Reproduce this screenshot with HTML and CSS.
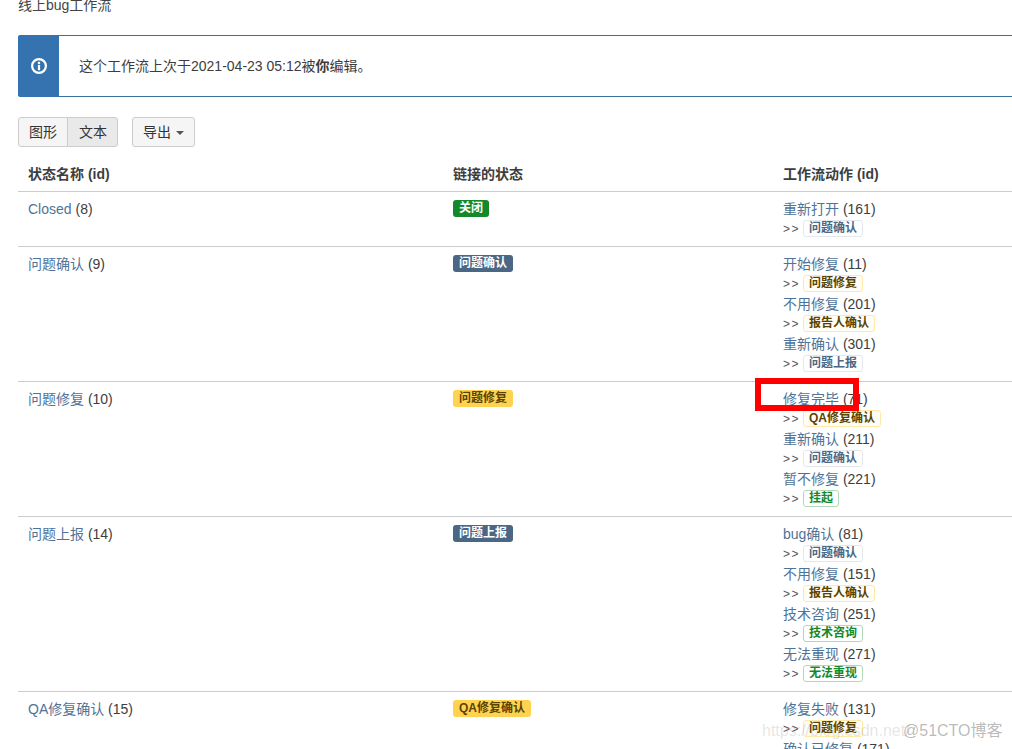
FILE: index.html
```html
<!DOCTYPE html>
<html>
    <head>
        <title>线上bug工作流</title>
        <meta charset="UTF-8">
        <link rel="stylesheet" href="styles.css">
    </head>
    <body>
        <div class="page">
            <div class="title">线上bug工作流</div>

            <div class="notice">
                <div class="notice-icon">
                    <svg width="18" height="18" viewBox="0 0 18 18">
                        <circle cx="9" cy="9" r="6.9" fill="none" stroke="#fff" stroke-width="2.2"/>
                        <rect x="7.9" y="4.8" width="2.2" height="2.2" fill="#fff"/>
                        <rect x="7.9" y="7.9" width="2.2" height="5.3" fill="#fff"/>
                    </svg>
                </div>
                <div class="notice-text">这个工作流上次于2021-04-23 05:12被<b>你</b>编辑。</div>
            </div>

            <div class="toolbar">
                <div class="btn-group">
                    <a class="btn">图形</a>
                    <a class="btn active">文本</a>
                </div>
                <a class="btn">导出 <span class="caret"></span></a>
            </div>

            <table class="steps">
                <colgroup>
                    <col class="col-name">
                    <col class="col-link">
                    <col class="col-action">
                </colgroup>
                <thead>
                    <tr>
                        <th>状态名称 (id)</th>
                        <th>链接的状态</th>
                        <th>工作流动作 (id)</th>
                    </tr>
                </thead>
                <tbody>
                    <tr>
                        <td><div class="line"><a>Closed</a> (8)</div></td>
                        <td><div class="line"><span class="lozenge green">关闭</span></div></td>
                        <td>
                            <div class="line"><a>重新打开</a> (161)</div>
                            <div class="line"><span class="arrow">&gt;&gt;</span><span class="lozenge outline-blue">问题确认</span></div>
                        </td>
                    </tr>
                    <tr>
                        <td><div class="line"><a>问题确认</a> (9)</div></td>
                        <td><div class="line"><span class="lozenge blue">问题确认</span></div></td>
                        <td>
                            <div class="line"><a>开始修复</a> (11)</div>
                            <div class="line"><span class="arrow">&gt;&gt;</span><span class="lozenge outline-yellow">问题修复</span></div>
                            <div class="line"><a>不用修复</a> (201)</div>
                            <div class="line"><span class="arrow">&gt;&gt;</span><span class="lozenge outline-yellow">报告人确认</span></div>
                            <div class="line"><a>重新确认</a> (301)</div>
                            <div class="line"><span class="arrow">&gt;&gt;</span><span class="lozenge outline-blue">问题上报</span></div>
                        </td>
                    </tr>
                    <tr>
                        <td><div class="line"><a>问题修复</a> (10)</div></td>
                        <td><div class="line"><span class="lozenge yellow">问题修复</span></div></td>
                        <td>
                            <div class="line"><a>修复完毕</a> (71)</div>
                            <div class="line"><span class="arrow">&gt;&gt;</span><span class="lozenge outline-yellow">QA修复确认</span></div>
                            <div class="line"><a>重新确认</a> (211)</div>
                            <div class="line"><span class="arrow">&gt;&gt;</span><span class="lozenge outline-blue">问题确认</span></div>
                            <div class="line"><a>暂不修复</a> (221)</div>
                            <div class="line"><span class="arrow">&gt;&gt;</span><span class="lozenge outline-green">挂起</span></div>
                        </td>
                    </tr>
                    <tr>
                        <td><div class="line"><a>问题上报</a> (14)</div></td>
                        <td><div class="line"><span class="lozenge blue">问题上报</span></div></td>
                        <td>
                            <div class="line"><a>bug确认</a> (81)</div>
                            <div class="line"><span class="arrow">&gt;&gt;</span><span class="lozenge outline-blue">问题确认</span></div>
                            <div class="line"><a>不用修复</a> (151)</div>
                            <div class="line"><span class="arrow">&gt;&gt;</span><span class="lozenge outline-yellow">报告人确认</span></div>
                            <div class="line"><a>技术咨询</a> (251)</div>
                            <div class="line"><span class="arrow">&gt;&gt;</span><span class="lozenge outline-green">技术咨询</span></div>
                            <div class="line"><a>无法重现</a> (271)</div>
                            <div class="line"><span class="arrow">&gt;&gt;</span><span class="lozenge outline-green">无法重现</span></div>
                        </td>
                    </tr>
                    <tr>
                        <td><div class="line"><a>QA修复确认</a> (15)</div></td>
                        <td><div class="line"><span class="lozenge yellow">QA修复确认</span></div></td>
                        <td>
                            <div class="line"><a>修复失败</a> (131)</div>
                            <div class="line"><span class="arrow">&gt;&gt;</span><span class="lozenge outline-yellow">问题修复</span></div>
                            <div class="line"><a>确认已修复</a> (171)</div>
                        </td>
                    </tr>
                </tbody>
            </table>
        </div>

        <div class="red-box"></div>
        <div class="mark mark-csdn">https://blog.csdn.net/</div>
        <div class="mark mark-cto">@51CTO博客</div>
    </body>
</html>
```

FILE: styles.css
```css
html, body {
    height: 749px;
    margin: 0;
    overflow: hidden;
}
body {
    position: relative;
    background: #fff;
    color: #3d3d3d;
    font-family: "Liberation Sans", "Noto Sans CJK SC", sans-serif;
    font-size: 14px;
    line-height: 20px;
}
.page {
    width: 1100px;
    padding-left: 18px;
}
.title {
    height: 15px;
    margin-top: -5px;
    color: #444;
}
.notice {
    display: flex;
    height: 62px;
    margin-top: 25px;
    border: 1px solid #3b6e98;
    border-right: 0;
    border-radius: 3px 0 0 3px;
    box-sizing: border-box;
}
.notice-icon {
    display: flex;
    align-items: center;
    justify-content: center;
    width: 41px;
    margin: -1px 0 -1px -1px;
    background: #3572b0;
    border-radius: 3px 0 0 3px;
}
.notice-text {
    padding-left: 20px;
    line-height: 60px;
}
.toolbar {
    display: flex;
    gap: 14px;
    margin-top: 20px;
}
.btn-group {
    display: flex;
}
.btn {
    display: block;
    height: 30px;
    padding: 0 10px;
    box-sizing: border-box;
    border: 1px solid #ccc;
    border-radius: 3px;
    background: #f5f5f5;
    color: #333;
    line-height: 28px;
}
.btn-group .btn:first-child {
    border-radius: 3px 0 0 3px;
}
.btn-group .btn:last-child {
    margin-left: -1px;
    padding-left: 11px;
    border-radius: 0 3px 3px 0;
}
.btn.active {
    background: #e9e9e9;
}
.caret {
    display: inline-block;
    margin-left: 1px;
    vertical-align: 2px;
    border-top: 4px solid #555;
    border-left: 4px solid transparent;
    border-right: 4px solid transparent;
}
.steps {
    width: 1082px;
    margin-top: 17px;
    table-layout: fixed;
    border-collapse: collapse;
}
.col-name { width: 425px; }
.col-link { width: 330px; }
.steps th {
    height: 27px;
    padding: 0 10px 6px;
    box-sizing: border-box;
    text-align: left;
    font-weight: bold;
    border-bottom: 1px solid #ccc;
}
.steps td {
    padding: 7px 10px;
    vertical-align: top;
    border-bottom: 1px solid #ccc;
}
.steps a {
    color: #4f7398;
}
.line {
    display: flex;
    align-items: center;
    height: 20px;
    white-space: pre;
}
.arrow {
    width: 20px;
    font-size: 12px;
    letter-spacing: 1.5px;
    color: #555;
}
.lozenge {
    height: 17px;
    margin-bottom: 1px;
    padding: 0 6px;
    box-sizing: border-box;
    border-radius: 3px;
    font-size: 12px;
    font-weight: bold;
    line-height: 17px;
}
.green { background: #14892c; color: #fff; }
.blue { background: #4a6785; color: #fff; }
.yellow { background: #ffd351; color: #594300; }
.outline-blue, .outline-yellow, .outline-green {
    margin-bottom: 0;
    padding: 0 5px;
    background: #fff;
    border: 1px solid;
    line-height: 15px;
}
.outline-blue { border-color: #e4e8ed; color: #4a6785; }
.outline-yellow { border-color: #ffe9a8; color: #594300; background: #fffdf6; }
.outline-green { border-color: #b2d8b9; color: #14892c; }

/* annotation and watermarks pasted over the screenshot */
.red-box {
    position: absolute;
    left: 755px;
    top: 378px;
    width: 104px;
    height: 33px;
    box-sizing: border-box;
    border: 6px solid #f00;
}
.mark {
    position: absolute;
    top: 721px;
    white-space: nowrap;
}
.mark-csdn {
    left: 762px;
    color: rgba(120, 120, 120, 0.2);
    font-size: 16px;
}
.mark-cto {
    left: 903px;
    color: rgba(100, 100, 100, 0.45);
    font-size: 16px;
}
```
